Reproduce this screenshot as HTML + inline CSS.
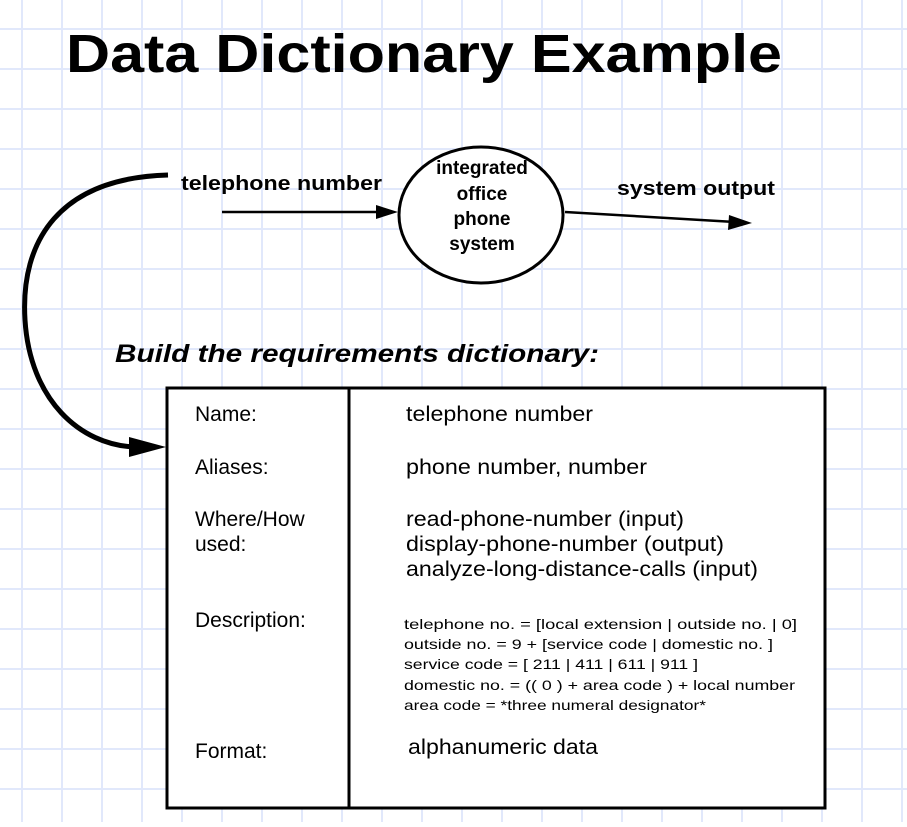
<!DOCTYPE html>
<html><head><style>
html,body{margin:0;padding:0;background:#fff}
body{width:907px;height:822px;overflow:hidden}
</style></head><body>
<svg width="907" height="822" xmlns="http://www.w3.org/2000/svg" font-family="Liberation Sans, sans-serif">
<defs>
<pattern id="g" x="21" y="28" width="40" height="40" patternUnits="userSpaceOnUse">
<path d="M0 1H40M1 0V40" stroke="#e1e8fb" stroke-width="2" fill="none"/>
</pattern>
</defs>
<rect width="907" height="822" fill="#fff"/>
<rect width="907" height="822" fill="url(#g)"/>
<text x="66" y="72" font-size="54" font-weight="bold" textLength="716" lengthAdjust="spacingAndGlyphs">Data Dictionary Example</text>
<text x="181" y="190" font-size="20" font-weight="bold" textLength="201" lengthAdjust="spacingAndGlyphs">telephone number</text>
<line x1="222" y1="212" x2="382" y2="212" stroke="#000" stroke-width="2.5"/>
<polygon points="398,212 376,205 376,219" fill="#000"/>
<ellipse cx="481" cy="215" rx="82" ry="68" fill="#fff" stroke="#000" stroke-width="3"/>
<g font-size="19" font-weight="bold" text-anchor="middle">
<text x="482" y="174">integrated</text>
<text x="482" y="200">office</text>
<text x="482" y="225">phone</text>
<text x="482" y="250">system</text>
</g>
<text x="617" y="195" font-size="20" font-weight="bold" textLength="158" lengthAdjust="spacingAndGlyphs">system output</text>
<line x1="565" y1="212" x2="735" y2="222" stroke="#000" stroke-width="2.5"/>
<polygon points="752,223 729,215 728,230" fill="#000"/>
<path d="M168 175 C60 178 20 240 25 320 C30 400 80 445 135 447" stroke="#000" stroke-width="5" fill="none"/>
<polygon points="166,447 129,437 129,457" fill="#000"/>
<text x="115" y="362" font-size="25" font-weight="bold" font-style="italic" textLength="484" lengthAdjust="spacingAndGlyphs">Build the requirements dictionary:</text>
<rect x="167" y="388" width="658" height="420" fill="#fff" stroke="#000" stroke-width="3"/>
<line x1="349" y1="388" x2="349" y2="808" stroke="#000" stroke-width="3"/>
<g font-size="21">
<text x="195" y="421">Name:</text>
<text x="195" y="474">Aliases:</text>
<text x="195" y="526">Where/How</text>
<text x="195" y="551">used:</text>
<text x="195" y="627">Description:</text>
<text x="195" y="758">Format:</text>
<text x="406" y="421" textLength="187" lengthAdjust="spacingAndGlyphs">telephone number</text>
<text x="406" y="474" textLength="241" lengthAdjust="spacingAndGlyphs">phone number, number</text>
<text x="406" y="526" textLength="278" lengthAdjust="spacingAndGlyphs">read-phone-number (input)</text>
<text x="406" y="551" textLength="318" lengthAdjust="spacingAndGlyphs">display-phone-number (output)</text>
<text x="406" y="576" textLength="352" lengthAdjust="spacingAndGlyphs">analyze-long-distance-calls (input)</text>
<text x="408" y="754" textLength="190" lengthAdjust="spacingAndGlyphs">alphanumeric data</text>
</g>
<g font-size="14">
<text x="404" y="629" textLength="393" lengthAdjust="spacingAndGlyphs">telephone no. = [local extension | outside no. | 0]</text>
<text x="404" y="649" textLength="369" lengthAdjust="spacingAndGlyphs">outside no. = 9 + [service code | domestic no. ]</text>
<text x="404" y="669" textLength="294" lengthAdjust="spacingAndGlyphs">service code = [ 211 | 411 | 611 | 911 ]</text>
<text x="404" y="690" textLength="391" lengthAdjust="spacingAndGlyphs">domestic no. = (( 0 ) + area code ) + local number</text>
<text x="404" y="710" textLength="302" lengthAdjust="spacingAndGlyphs">area code = *three numeral designator*</text>
</g>
</svg>
</body></html>
